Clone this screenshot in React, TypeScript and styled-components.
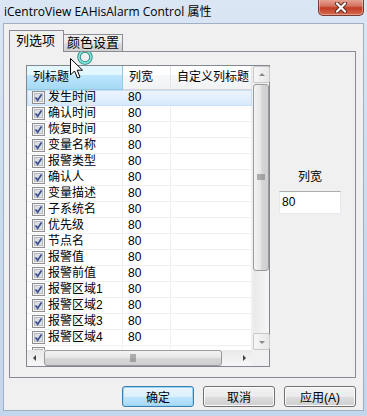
import React from 'react';
import styled, { createGlobalStyle } from 'styled-components';

const GlobalStyle = createGlobalStyle`
    html, body {
        margin: 0;
        padding: 0;
        background: #ffffff;
    }
    * {
        box-sizing: border-box;
    }
`

const UI_FONT = `"Liberation Sans", "Noto Sans CJK SC", sans-serif`;

const Window = styled.div`
    position: relative;
    width: 367px;
    height: 416px;
    display: flex;
    flex-direction: column;
    background: linear-gradient(#dae6f4, #c9daee 60%, #c3d6eb);
    overflow: hidden;
`

const TitleBar = styled.div`
    height: 23px;
    display: flex;
    align-items: flex-start;
    padding-left: 4px;
`

const Title = styled.div`
    margin-top: 4px;
    font-family: "Open Sans", "Noto Sans CJK SC", sans-serif;
    font-size: 12px;
    line-height: 15px;
    color: #000000;
    white-space: nowrap;
`

const CloseButton = styled.div`
    margin-left: auto;
    margin-right: 3px;
    margin-top: -1px;
    width: 46px;
    height: 17px;
    border: 1px solid #7a3a32;
    border-top: none;
    border-radius: 0 0 5px 5px;
    background: linear-gradient(#e9a99a, #d2705d 45%, #c13c25 55%, #d56a4f);
    box-shadow: inset 0 0 0 1px rgba(255, 255, 255, 0.35);
    display: flex;
    align-items: center;
    justify-content: center;
`

const Client = styled.div`
    flex: 1;
    margin: 0 3px 5px 3px;
    border: 1px solid #9fb0c6;
    background: #f0f0f0;
    padding: 6px 0 0 5px;
    display: flex;
    flex-direction: column;
`

const TabStrip = styled.div`
    display: flex;
    align-items: flex-end;
    height: 22px;
    position: relative;
    z-index: 1;
`

const Tab = styled.div<{ $active?: boolean }>`
    height: ${p => (p.$active ? '22px' : '18px')};
    padding: ${p => (p.$active ? '0 8px 0 6px' : '0 3px 0 3px')};
    margin-left: ${p => (p.$active ? '0' : '-1px')};
    border: 1px solid #898c95;
    border-bottom: ${p => (p.$active ? 'none' : '1px solid #898c95')};
    background: ${p => (p.$active ? '#f0f0f0' : 'linear-gradient(#f2f2f2, #ebebeb 50%, #dddddd 51%, #cfcfcf)')};
    font-family: ${UI_FONT};
    font-size: 13px;
    line-height: ${p => (p.$active ? '20px' : '16px')};
    color: #000000;
    white-space: nowrap;
`

const TabPanel = styled.div`
    margin-top: -1px;
    width: 347px;
    height: 327px;
    border: 1px solid #898c95;
    background: #f0f0f0;
    padding: 13px 0 0 16px;
    display: flex;
    align-items: flex-start;
`

const ListView = styled.div`
    width: 244px;
    height: 302px;
    border: 1px solid #828790;
    background: #ffffff;
    display: grid;
    grid-template-columns: 1fr 17px;
    grid-template-rows: 1fr 16px;
`

const ListContent = styled.div`
    overflow: hidden;
    display: flex;
    flex-direction: column;
`

const HeaderRow = styled.div`
    display: flex;
    height: 24px;
    flex-shrink: 0;
`

const HeaderCell = styled.div<{ $w: number; $hot?: boolean }>`
    width: ${p => p.$w}px;
    flex-shrink: 0;
    padding-left: 6px;
    border-right: 1px solid ${p => (p.$hot ? '#93c9e3' : '#e3e5e8')};
    border-bottom: 1px solid ${p => (p.$hot ? '#93c9e3' : '#d5d5d5')};
    background: ${p => (p.$hot
        ? 'linear-gradient(#e3f7ff, #e3f7ff 40%, #bde6fd 41%, #a6d9f4)'
        : 'linear-gradient(#ffffff, #ffffff 40%, #f7f8fa 41%, #f1f2f4)')};
    font-family: ${UI_FONT};
    font-size: 12px;
    line-height: 23px;
    color: #000000;
    white-space: nowrap;
    overflow: hidden;
`

const Row = styled.div<{ $selected?: boolean }>`
    display: flex;
    height: 16px;
    flex-shrink: 0;
    background: ${p => (p.$selected ? 'linear-gradient(#eef6fe, #d6e8fc)' : '#ffffff')};
    box-shadow: ${p => (p.$selected ? 'inset 0 0 0 1px #c8dffa' : 'none')};
`

const Cell = styled.div<{ $w: number; $selected?: boolean }>`
    width: ${p => p.$w}px;
    flex-shrink: 0;
    display: flex;
    align-items: center;
    gap: 3px;
    padding-left: 5px;
    border-right: 1px solid ${p => (p.$selected ? 'transparent' : '#f0f0f0')};
    border-bottom: 1px solid ${p => (p.$selected ? 'transparent' : '#f0f0f0')};
    font-family: ${UI_FONT};
    font-size: 12px;
    line-height: 15px;
    color: #000000;
    white-space: nowrap;
    overflow: hidden;
`

const VScroll = styled.div`
    display: flex;
    flex-direction: column;
    background: linear-gradient(90deg, #e9e9e9, #f6f6f6);
    border-left: 1px solid #f0f0f0;
`

const HScroll = styled.div`
    display: flex;
    align-items: stretch;
    background: linear-gradient(#e9e9e9, #f6f6f6);
`

const Corner = styled.div`
    background: #f0f0f0;
`

const ArrowButton = styled.div<{ $boxed?: boolean; $size: number }>`
    width: ${p => p.$size}px;
    height: ${p => p.$size}px;
    flex-shrink: 0;
    display: flex;
    align-items: center;
    justify-content: center;
    border: 1px solid ${p => (p.$boxed ? '#c9c9c9' : 'transparent')};
    border-radius: 2px;
    background: ${p => (p.$boxed ? 'linear-gradient(90deg, #f6f6f6, #e8e8e8)' : 'transparent')};
`

const VThumb = styled.div`
    height: 187px;
    margin: 1px 0;
    border: 1px solid #9a9a9a;
    border-radius: 3px;
    background: linear-gradient(90deg, #f3f3f3, #e8e8e8 45%, #d6d6d6 55%, #cfcfcf);
    display: flex;
    align-items: center;
    justify-content: center;
`

const HThumb = styled.div`
    width: 178px;
    margin: 0 1px;
    border: 1px solid #9a9a9a;
    border-radius: 3px;
    background: linear-gradient(#f3f3f3, #e8e8e8 45%, #d6d6d6 55%, #cfcfcf);
    display: flex;
    align-items: center;
    justify-content: center;
`

const Track = styled.div`
    flex: 1;
`

const SidePanel = styled.div`
    width: 62px;
    margin-left: 9px;
    margin-top: 104px;
    display: flex;
    flex-direction: column;
    align-items: center;
    gap: 6px;
`

const Label = styled.div`
    font-family: ${UI_FONT};
    font-size: 12px;
    line-height: 16px;
    color: #000000;
`

const EditBox = styled.div`
    width: 62px;
    height: 23px;
    border: 1px solid #e3e9ef;
    border-top-color: #abadb3;
    background: #ffffff;
    padding-left: 2px;
    font-family: ${UI_FONT};
    font-size: 12px;
    line-height: 21px;
    color: #000000;
`

const ButtonRow = styled.div`
    width: 347px;
    margin-top: 8px;
    display: flex;
    justify-content: flex-end;
    gap: 9px;
`

const Button = styled.div<{ $default?: boolean }>`
    width: 72px;
    height: 21px;
    border: 1px solid ${p => (p.$default ? '#3c7fb1' : '#707070')};
    border-radius: 3px;
    background: ${p => (p.$default
        ? 'linear-gradient(#eaf6fd, #d9f0fc 50%, #bee6fd 51%, #a7d9f5)'
        : 'linear-gradient(#f2f2f2, #ebebeb 50%, #dddddd 51%, #cfcfcf)')};
    box-shadow: inset 0 0 0 1px ${p => (p.$default ? '#9bd4f2' : '#fcfcfc')};
    display: flex;
    align-items: center;
    justify-content: center;
    font-family: ${UI_FONT};
    font-size: 12px;
    color: #000000;
`

const CursorLayer = styled.svg`
    position: absolute;
    left: 68px;
    top: 48px;
    pointer-events: none;
`

const COLS = [96, 48, 81];

const ITEMS = [
    '发生时间', '确认时间', '恢复时间', '变量名称', '报警类型', '确认人',
    '变量描述', '子系统名', '优先级', '节点名', '报警值', '报警前值',
    '报警区域1', '报警区域2', '报警区域3', '报警区域4',
];

const CheckBox = () => (
    <svg width="13" height="13" viewBox="0 0 13 13">
        <rect x="0.5" y="0.5" width="12" height="12" fill="#f2f2f2" stroke="#8e8f8f" />
        <rect x="2.5" y="2.5" width="8" height="8" fill="#dcdee2" stroke="#b9bcc1" />
        <path d="M3.5 6.5 L5.6 9.2 L9.6 3.4" fill="none" stroke="#3e5393" strokeWidth="1.8" />
    </svg>
);

const Triangle = ({ dir }: { dir: 'up' | 'down' | 'left' | 'right' }) => {
    const pts = {
        up: '1,5 4,2 7,5',
        down: '1,3 4,6 7,3',
        left: '5,1 2,4 5,7',
        right: '3,1 6,4 3,7',
    }[dir];
    const dark = dir === 'left' || dir === 'right';
    return (
        <svg width="8" height="8" viewBox="0 0 8 8">
            <polygon points={pts} fill={dark ? '#404040' : '#8a8a8a'} />
        </svg>
    );
};

const Gripper = ({ vertical }: { vertical?: boolean }) => (
    <svg width={vertical ? 8 : 7} height={vertical ? 7 : 8} viewBox={vertical ? '0 0 8 7' : '0 0 7 8'}>
        {[0, 2, 4].map(i =>
            vertical
                ? <rect key={i} x="0" y={i + 0.5} width="8" height="1" fill="#6f6f6f" />
                : <rect key={i} x={i + 0.5} y="0" width="1" height="8" fill="#6f6f6f" />
        )}
    </svg>
);

const App = () => {
    return (
        <>
            <GlobalStyle />
            <Window>
                <TitleBar>
                    <Title>iCentroView EAHisAlarm Control 属性</Title>
                    <CloseButton>
                        <svg width="14" height="11" viewBox="0 0 14 11">
                            <path d="M3 1.5 L11 9.5 M11 1.5 L3 9.5" stroke="#5b2a22" strokeWidth="4" strokeLinecap="round" />
                            <path d="M3 1.5 L11 9.5 M11 1.5 L3 9.5" stroke="#ffffff" strokeWidth="2.2" strokeLinecap="round" />
                        </svg>
                    </CloseButton>
                </TitleBar>
                <Client>
                    <TabStrip>
                        <Tab $active>列选项</Tab>
                        <Tab>颜色设置</Tab>
                    </TabStrip>
                    <TabPanel>
                        <ListView>
                            <ListContent>
                                <HeaderRow>
                                    <HeaderCell $w={COLS[0]} $hot>列标题</HeaderCell>
                                    <HeaderCell $w={COLS[1]}>列宽</HeaderCell>
                                    <HeaderCell $w={COLS[2]}>自定义列标题</HeaderCell>
                                </HeaderRow>
                                {ITEMS.map((name, i) => (
                                    <Row key={name} $selected={i === 0}>
                                        <Cell $w={COLS[0]} $selected={i === 0}><CheckBox />{name}</Cell>
                                        <Cell $w={COLS[1]} $selected={i === 0}>80</Cell>
                                        <Cell $w={COLS[2]} $selected={i === 0}></Cell>
                                    </Row>
                                ))}
                                {/* next row, only its top edge shows above the scroll bar */}
                                <Row>
                                    <Cell $w={COLS[0]}><CheckBox /></Cell>
                                    <Cell $w={COLS[1]}></Cell>
                                    <Cell $w={COLS[2]}></Cell>
                                </Row>
                            </ListContent>
                            <VScroll>
                                <ArrowButton $boxed $size={17}><Triangle dir="up" /></ArrowButton>
                                <VThumb><Gripper vertical /></VThumb>
                                <Track />
                                <ArrowButton $boxed $size={17}><Triangle dir="down" /></ArrowButton>
                            </VScroll>
                            <HScroll>
                                <ArrowButton $size={16}><Triangle dir="left" /></ArrowButton>
                                <HThumb><Gripper /></HThumb>
                                <Track />
                                <ArrowButton $size={16}><Triangle dir="right" /></ArrowButton>
                            </HScroll>
                            <Corner />
                        </ListView>
                        <SidePanel>
                            <Label>列宽</Label>
                            <EditBox>80</EditBox>
                        </SidePanel>
                    </TabPanel>
                    <ButtonRow>
                        <Button $default>确定</Button>
                        <Button>取消</Button>
                        <Button>应用(A)</Button>
                    </ButtonRow>
                </Client>
                <CursorLayer width="32" height="40" viewBox="0 0 32 40">
                    <circle cx="17" cy="9" r="6" fill="none" stroke="#1f7f7a" strokeWidth="3.4" />
                    <circle cx="17" cy="9" r="6" fill="none" stroke="#7fe3d8" strokeWidth="1.8" />
                    <path d="M2.5 10.5 L2.5 27 L6.5 23 L9.5 30 L12 29 L9.2 22.2 L14.5 22.2 Z" fill="#ffffff" stroke="#000000" strokeWidth="1" strokeLinejoin="round" />
                </CursorLayer>
            </Window>
        </>
    );
};

export default App
